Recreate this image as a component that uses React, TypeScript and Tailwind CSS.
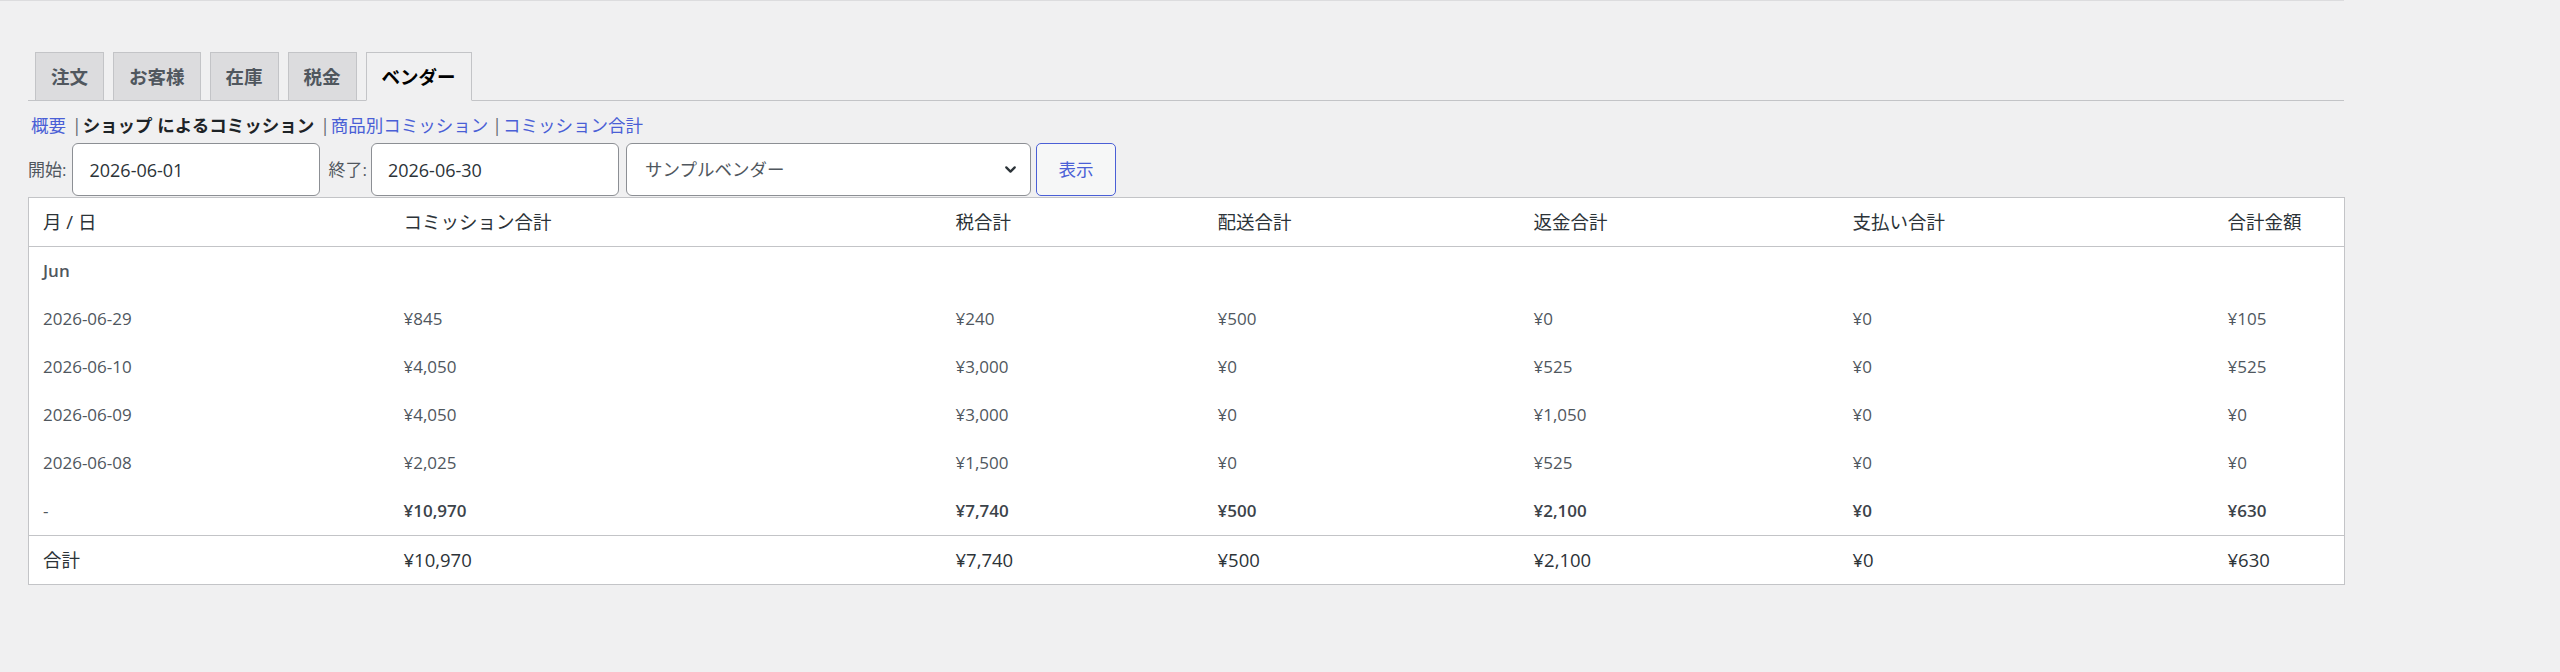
import { ChevronDown } from 'lucide-react'

const tabs = [
  { label: '注文', active: false },
  { label: 'お客様', active: false },
  { label: '在庫', active: false },
  { label: '税金', active: false },
  { label: 'ベンダー', active: true },
]

const rows: string[][] = [
  ['2026-06-29', '¥845', '¥240', '¥500', '¥0', '¥0', '¥105'],
  ['2026-06-10', '¥4,050', '¥3,000', '¥0', '¥525', '¥0', '¥525'],
  ['2026-06-09', '¥4,050', '¥3,000', '¥0', '¥1,050', '¥0', '¥0'],
  ['2026-06-08', '¥2,025', '¥1,500', '¥0', '¥525', '¥0', '¥0'],
]

const subtotal = ['¥10,970', '¥7,740', '¥500', '¥2,100', '¥0', '¥630']

const headers = ['月 / 日', 'コミッション合計', '税合計', '配送合計', '返金合計', '支払い合計', '合計金額']

export default function App() {
  return (
    <div className="h-[672px] w-full bg-[#f0f0f1] font-['Open_Sans','Noto_Sans_CJK_JP',sans-serif]">
      <div className="w-[2344px] border-t border-[#dcdcde] pl-[28px] pt-[51px]">
        {/* タブ */}
        <nav className="flex gap-[9px] border-b border-[#c3c4c7] pl-[7px]">
          {tabs.map((t) => (
            <div
              key={t.label}
              className={`-mb-px flex h-[49px] items-center border px-[15px] text-[18.5px] font-semibold ${
                t.active
                  ? 'border-[#c3c4c7] border-b-[#f0f0f1] bg-[#f0f0f1] text-black'
                  : 'border-[#c3c4c7] bg-[#dcdcde] text-[#50575e]'
              }`}
            >
              {t.label}
            </div>
          ))}
        </nav>

        {/* サブナビ */}
        <div className="mt-[11px] pl-[3px] text-[17.5px] leading-[26px]">
          <a className="text-[#4a5fd6]">概要</a>
          <span className="ml-[6px] mr-[1px] text-[#646970]">|</span>
          <span className="font-semibold text-[#1d2327]">ショップ によるコミッション</span>
          <span className="ml-[6px] mr-[1px] text-[#646970]">|</span>
          <a className="text-[#4a5fd6]">商品別コミッション</a>
          <span className="ml-[4px] mr-[1px] text-[#646970]">|</span>
          <a className="text-[#4a5fd6]">コミッション合計</a>
        </div>

        {/* フィルター */}
        <div className="mt-[5px] flex h-[53px] items-center">
          <span className="text-[17px] text-[#50575e]">開始:</span>
          <input
            readOnly
            defaultValue="2026-06-01"
            className="ml-[6px] h-[53px] w-[248px] rounded-[6px] border border-[#8c8f94] bg-white px-[16px] text-[18px] text-[#2c3338] outline-none"
          />
          <span className="ml-[8px] text-[17px] text-[#50575e]">終了:</span>
          <input
            readOnly
            defaultValue="2026-06-30"
            className="ml-[4px] h-[53px] w-[248px] rounded-[6px] border border-[#8c8f94] bg-white px-[16px] text-[18px] text-[#2c3338] outline-none"
          />
          <div className="ml-[7px] flex h-[53px] w-[405px] items-center justify-between rounded-[6px] border border-[#8c8f94] bg-white pl-[18px] pr-[11px]">
            <span className="text-[17.5px] text-[#50575e]">サンプルベンダー</span>
            <ChevronDown className="h-[17px] w-[17px] text-[#2c3338]" strokeWidth={3.2} />
          </div>
          <button className="ml-[5px] h-[53px] w-[80px] rounded-[5px] border border-[#4a5fd6] bg-[#f6f7f7] text-[17.5px] text-[#4a5fd6]">
            表示
          </button>
        </div>

        {/* テーブル */}
        <table className="mt-[1px] w-[2316px] table-fixed border-collapse border border-[#c3c4c7] bg-white text-left">
          <colgroup>
            <col className="w-[361px]" />
            <col className="w-[552px]" />
            <col className="w-[262px]" />
            <col className="w-[316px]" />
            <col className="w-[319px]" />
            <col className="w-[375px]" />
            <col className="w-[131px]" />
          </colgroup>
          <thead>
            <tr className="border-b border-[#c3c4c7]">
              {headers.map((h) => (
                <th key={h} className="px-[14px] py-[11px] text-[18.5px] font-normal leading-[26px] text-[#2c3338]">
                  {h}
                </th>
              ))}
            </tr>
          </thead>
          <tbody className="text-[17px] leading-[26px] text-[#50575e]">
            <tr>
              <td className="px-[14px] py-[11px] font-semibold">Jun</td>
              <td colSpan={6} />
            </tr>
            {rows.map((r) => (
              <tr key={r[0]}>
                {r.map((c, i) => (
                  <td key={i} className="px-[14px] py-[11px]">
                    {c}
                  </td>
                ))}
              </tr>
            ))}
            <tr>
              <td className="px-[14px] py-[11px]">-</td>
              {subtotal.map((c, i) => (
                <td key={i} className="px-[14px] py-[11px] font-semibold text-[#3c434a]">
                  {c}
                </td>
              ))}
            </tr>
          </tbody>
          <tfoot>
            <tr className="border-t border-[#c3c4c7]">
              <td className="px-[14px] py-[11px] text-[18.5px] leading-[26px] text-[#2c3338]">合計</td>
              {subtotal.map((c, i) => (
                <td key={i} className="px-[14px] py-[11px] text-[18.5px] leading-[26px] text-[#2c3338]">
                  {c}
                </td>
              ))}
            </tr>
          </tfoot>
        </table>
      </div>
    </div>
  )
}
